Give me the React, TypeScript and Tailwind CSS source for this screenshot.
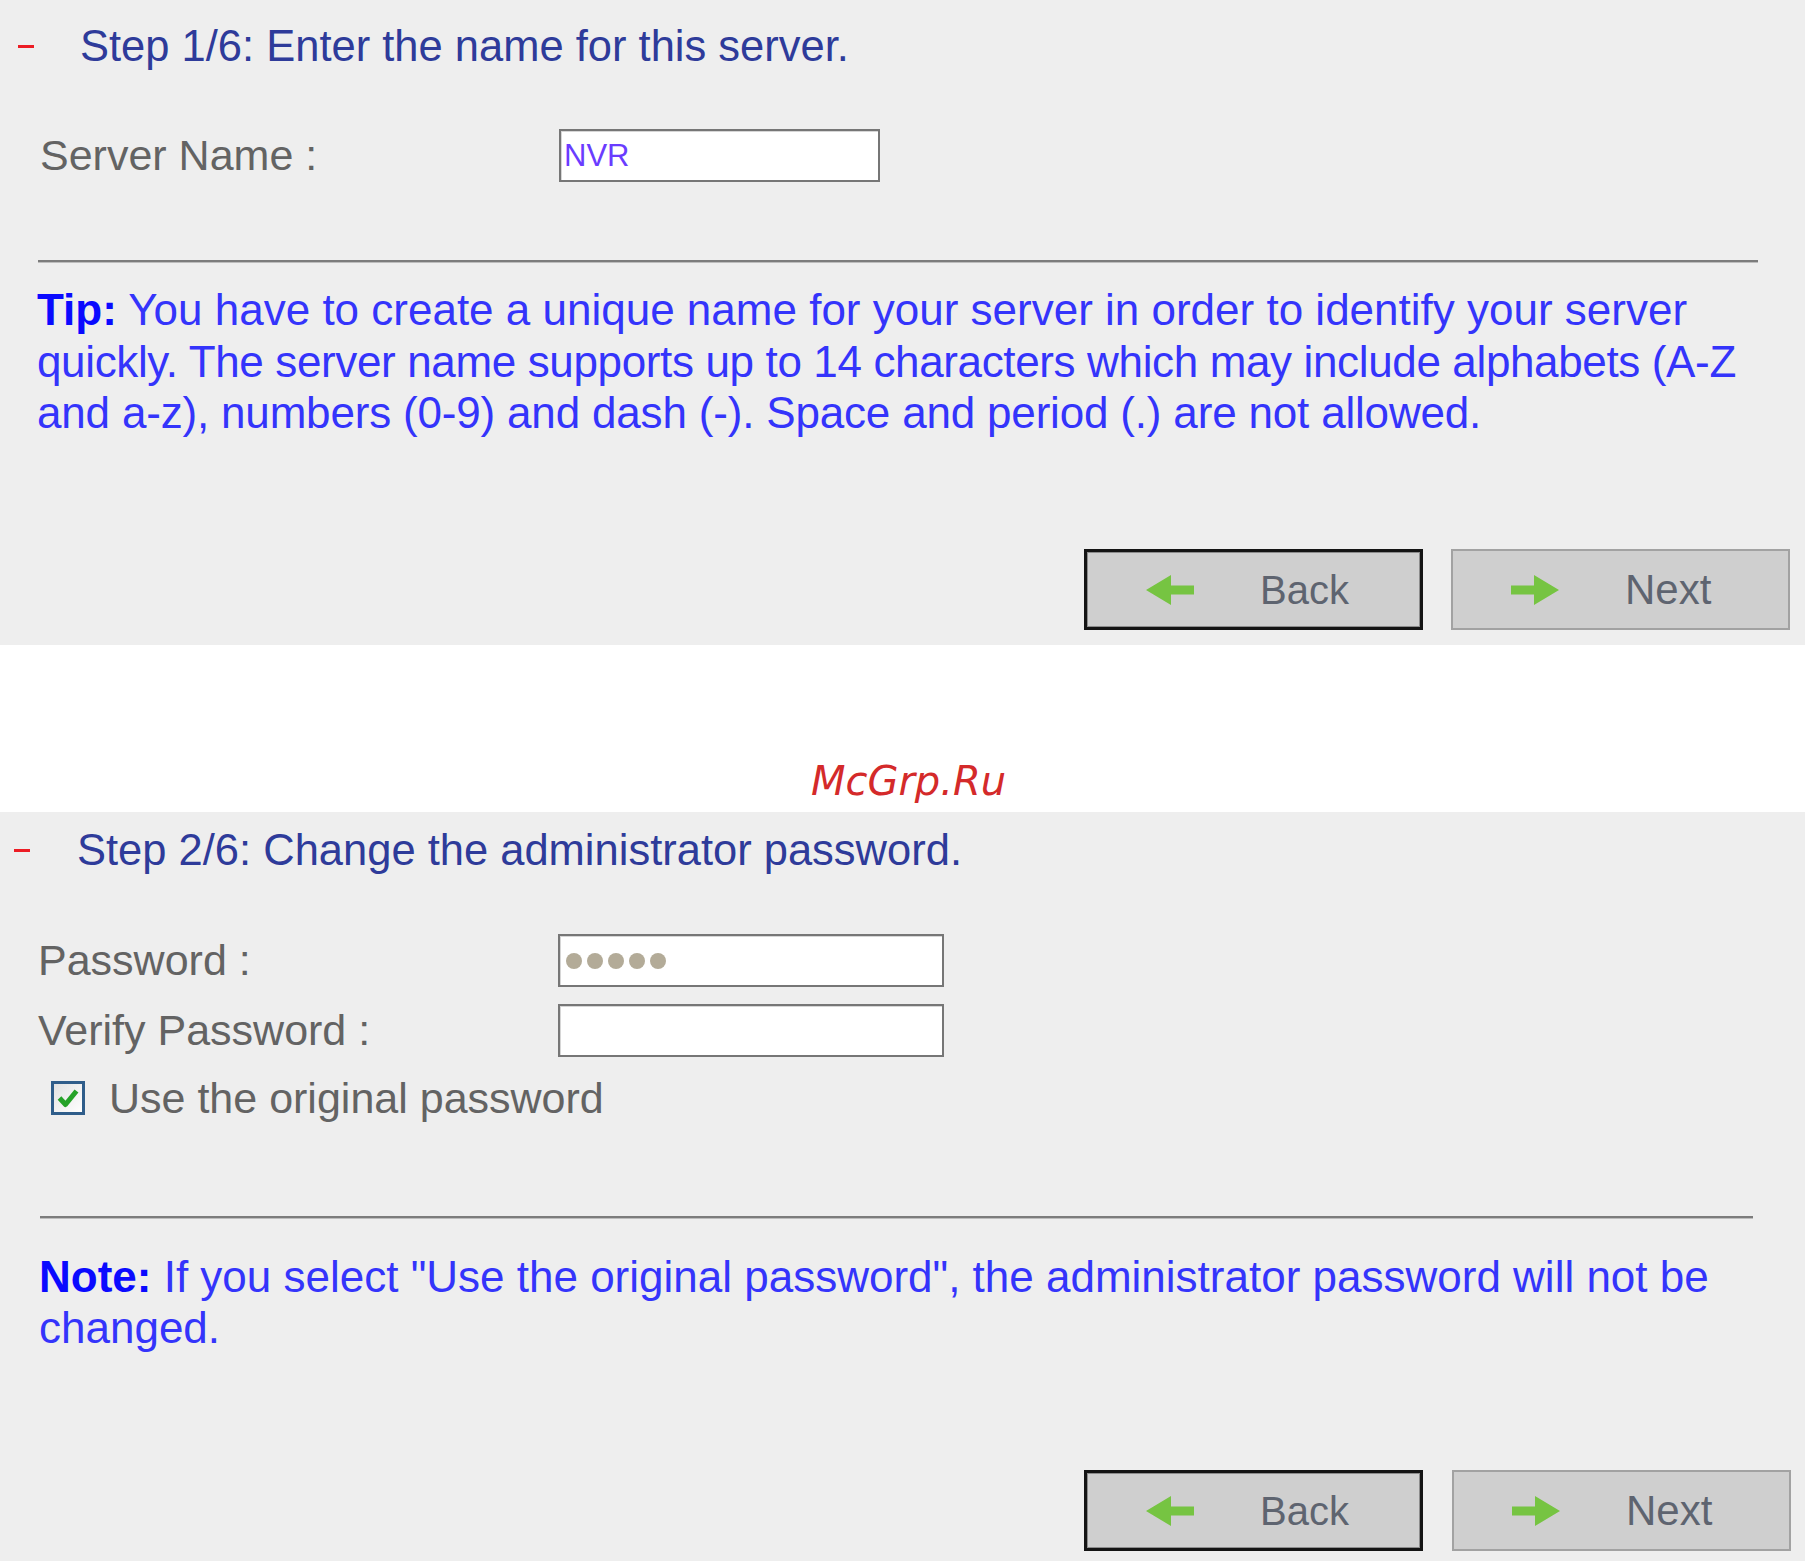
import clsx from "clsx"

function StepHeading({ text, dashLeft, textGap }: { text: string; dashLeft: string; textGap: string }) {
  return (
    <div className="flex h-[50px] items-center">
      <span className={clsx("h-[3px] w-[16px] bg-[#ec1c24]", dashLeft)} />
      <span className={clsx("whitespace-nowrap text-[43.5px] leading-[50px] text-[#2e3b9a]", textGap)}>{text}</span>
    </div>
  )
}

function TextBox({ width, children }: { width: string; children?: React.ReactNode }) {
  return (
    <div
      className={clsx(
        "flex h-[53px] items-center border-2 border-[#767676] bg-white shadow-[inset_1px_1px_0_#d6d6d6]",
        width
      )}
    >
      {children}
    </div>
  )
}

function Arrow({ dir }: { dir: "left" | "right" }) {
  return (
    <svg width="48" height="30" viewBox="0 0 48 30">
      {dir === "left" ? (
        <path d="M0 15 L25 0 L25 10.5 L48 10.5 L48 19.5 L25 19.5 L25 30 Z" fill="#76c442" />
      ) : (
        <path d="M48 15 L23 0 L23 10.5 L0 10.5 L0 19.5 L23 19.5 L23 30 Z" fill="#76c442" />
      )}
    </svg>
  )
}

function NavButton({ dir, label, focused }: { dir: "left" | "right"; label: string; focused?: boolean }) {
  return (
    <div
      className={clsx(
        "flex h-[81px] w-[339px] items-center gap-[66px] bg-[#cfcfcf]",
        focused
          ? "border-[3px] border-[#141414] pl-[59px] shadow-[inset_0_0_0_1px_#8c8c8c]"
          : "border-2 border-[#a2a2a2] pl-[58px]"
      )}
    >
      <Arrow dir={dir} />
      <span className={clsx("leading-none text-[#5e6470]", focused ? "text-[40px]" : "text-[42px]")}>{label}</span>
    </div>
  )
}

function Divider({ className }: { className: string }) {
  return <div className={clsx("h-[3px] border-t-2 border-b border-t-[#7c7c7c] border-b-[#bdbdbd]", className)} />
}

export default function App() {
  return (
    <div className="flex h-[1561px] w-[1805px] flex-col bg-white font-['Liberation_Sans',Arial,sans-serif]">
      {/* step 1 */}
      <section className="flex h-[645px] flex-col bg-[#eeeeee] pt-[21px] pb-[15px]">
        <StepHeading text="Step 1/6: Enter the name for this server." dashLeft="ml-[18px]" textGap="ml-[46px]" />

        <div className="mt-[58px] flex items-center pl-[40px]">
          <span className="w-[519px] text-[43px] leading-none text-[#636363]">Server Name :</span>
          <TextBox width="w-[321px]">
            <span className="pl-[3px] text-[31px] leading-none text-[#6a3cff]">NVR</span>
          </TextBox>
        </div>

        <Divider className="mt-[78px] ml-[38px] w-[1720px]" />

        <p className="mt-[21px] ml-[37px] whitespace-nowrap text-[44px] leading-[51.5px] text-[#3434fb]">
          <b className="text-[#0a0aff]">Tip:</b> You have to create a unique name for your server in order to identify your server
          <br />
          <span className="tracking-[-0.36px]">
            quickly. The server name supports up to 14 characters which may include alphabets (A-Z
          </span>
          <br />
          <span className="tracking-[-0.18px]">
            and a-z), numbers (0-9) and dash (-). Space and period (.) are not allowed.
          </span>
        </p>

        <div className="mt-auto flex justify-end gap-[28px] pr-[15px]">
          <NavButton dir="left" label="Back" focused />
          <NavButton dir="right" label="Next" />
        </div>
      </section>

      {/* watermark band */}
      <div className="h-[167px] pt-[112px] pl-[12px] text-center font-['DejaVu_Sans',sans-serif] text-[40px] italic leading-[48px] text-[#d42a2a]">
        McGrp.Ru
      </div>

      {/* step 2 */}
      <section className="flex flex-1 flex-col bg-[#eeeeee] pt-[13px] pb-[10px]">
        <StepHeading text="Step 2/6: Change the administrator password." dashLeft="ml-[14px]" textGap="ml-[47px]" />

        <div className="mt-[59px] flex items-center pl-[38px]">
          <span className="w-[520px] text-[43px] leading-none text-[#636363]">Password :</span>
          <TextBox width="w-[386px]">
            <div className="flex gap-[5px] pl-[6px]">
              {[0, 1, 2, 3, 4].map((i) => (
                <span key={i} className="h-[16px] w-[16px] rounded-full bg-[#b3ab98]" />
              ))}
            </div>
          </TextBox>
        </div>

        <div className="mt-[17px] flex items-center pl-[38px]">
          <span className="w-[520px] text-[43px] leading-none text-[#636363]">Verify Password :</span>
          <TextBox width="w-[386px]" />
        </div>

        <label className="mt-[16px] flex h-[50px] items-center gap-[24px] pl-[51px]">
          <span className="flex h-[34px] w-[34px] items-center justify-center border-[3px] border-[#2f5d8a] bg-gradient-to-br from-[#e2e2e2] to-white">
            <svg width="22" height="20" viewBox="0 0 22 20">
              <path d="M2.5 10 L8.5 16.5 L19.5 3" fill="none" stroke="#25a228" strokeWidth="5" strokeLinejoin="round" />
            </svg>
          </span>
          <span className="text-[43px] leading-none text-[#636363]">Use the original password</span>
        </label>

        <Divider className="mt-[93px] ml-[40px] w-[1713px]" />

        <p className="mt-[32px] ml-[39px] whitespace-nowrap text-[44px] leading-[51px] text-[#3434fb]">
          <b className="text-[#0a0aff]">Note:</b> If you select "Use the original password", the administrator password will not be
          <br />
          changed.
        </p>

        <div className="mt-auto flex justify-end gap-[29px] pr-[14px]">
          <NavButton dir="left" label="Back" focused />
          <NavButton dir="right" label="Next" />
        </div>
      </section>
    </div>
  )
}
